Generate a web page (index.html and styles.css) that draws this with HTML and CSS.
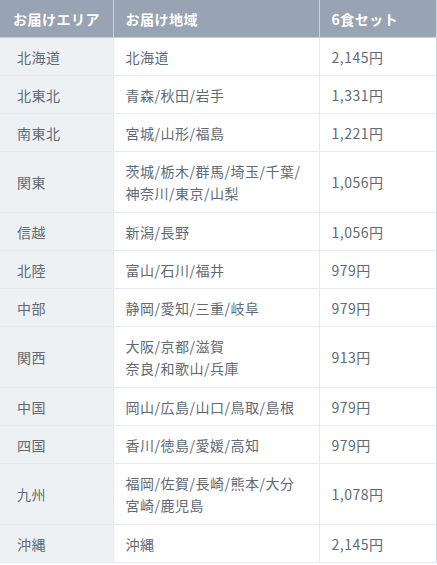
FILE: index.html
```html
<!DOCTYPE html>
<html lang="ja">
<head>
<meta charset="utf-8">
<link rel="stylesheet" href="styles.css">
</head>
<body>
<table class="price-table">
  <colgroup>
    <col class="c-area">
    <col class="c-pref">
    <col class="c-price">
  </colgroup>
  <thead>
    <tr>
      <th>お届けエリア</th>
      <th>お届け地域</th>
      <th>6食セット</th>
    </tr>
  </thead>
  <tbody>
    <tr><td class="area">北海道</td><td>北海道</td><td>2,145円</td></tr>
    <tr><td class="area">北東北</td><td>青森/秋田/岩手</td><td>1,331円</td></tr>
    <tr><td class="area">南東北</td><td>宮城/山形/福島</td><td>1,221円</td></tr>
    <tr class="two"><td class="area">関東</td><td>茨城/栃木/群馬/埼玉/千葉/<br>神奈川/東京/山梨</td><td>1,056円</td></tr>
    <tr><td class="area">信越</td><td>新潟/長野</td><td>1,056円</td></tr>
    <tr><td class="area">北陸</td><td>富山/石川/福井</td><td>979円</td></tr>
    <tr><td class="area">中部</td><td>静岡/愛知/三重/岐阜</td><td>979円</td></tr>
    <tr class="two"><td class="area">関西</td><td>大阪/京都/滋賀<br>奈良/和歌山/兵庫</td><td>913円</td></tr>
    <tr><td class="area">中国</td><td>岡山/広島/山口/鳥取/島根</td><td>979円</td></tr>
    <tr><td class="area">四国</td><td>香川/徳島/愛媛/高知</td><td>979円</td></tr>
    <tr class="two"><td class="area">九州</td><td>福岡/佐賀/長崎/熊本/大分<br>宮崎/鹿児島</td><td>1,078円</td></tr>
    <tr><td class="area">沖縄</td><td>沖縄</td><td>2,145円</td></tr>
  </tbody>
</table>
</body>
</html>
```
FILE: styles.css
```css
html, body {
  margin: 0;
  padding: 0;
  background: #ffffff;
}

body {
  font-family: "Noto Sans CJK JP", "Noto Sans", sans-serif;
  color: #5f6a75;
}

.price-table {
  width: 436px;
  border-collapse: collapse;
  table-layout: fixed;
  border-right: 1px solid #cdd3da;
  border-bottom: 1px solid #cdd3da;
}

.c-area { width: 113px; }
.c-pref { width: 206px; }
.c-price { width: 117px; }

.price-table th {
  background: #98a4b3;
  color: #ffffff;
  font-weight: 700;
  font-size: 14px;
  line-height: 22px;
  letter-spacing: 0.5px;
  text-align: left;
  padding: 8px 12px 7px;
  border-left: 1px solid #c9d0d8;
  border-bottom: 1px solid #c9d0d8;
}

.price-table th:first-child {
  border-left: none;
  padding-left: 13px;
}

.price-table td {
  font-size: 14px;
  line-height: 22px;
  letter-spacing: 0.5px;
  padding: 8px 12px 7px;
  border-left: 1px solid #e6eaee;
  border-bottom: 1px solid #e6eaee;
  vertical-align: middle;
  background: #ffffff;
  color: #5f6a75;
}

.price-table tr.two td {
  padding-bottom: 8px;
}

.price-table td.area {
  background: #eef1f4;
  border-left: none;
  padding-left: 17px;
}
```
